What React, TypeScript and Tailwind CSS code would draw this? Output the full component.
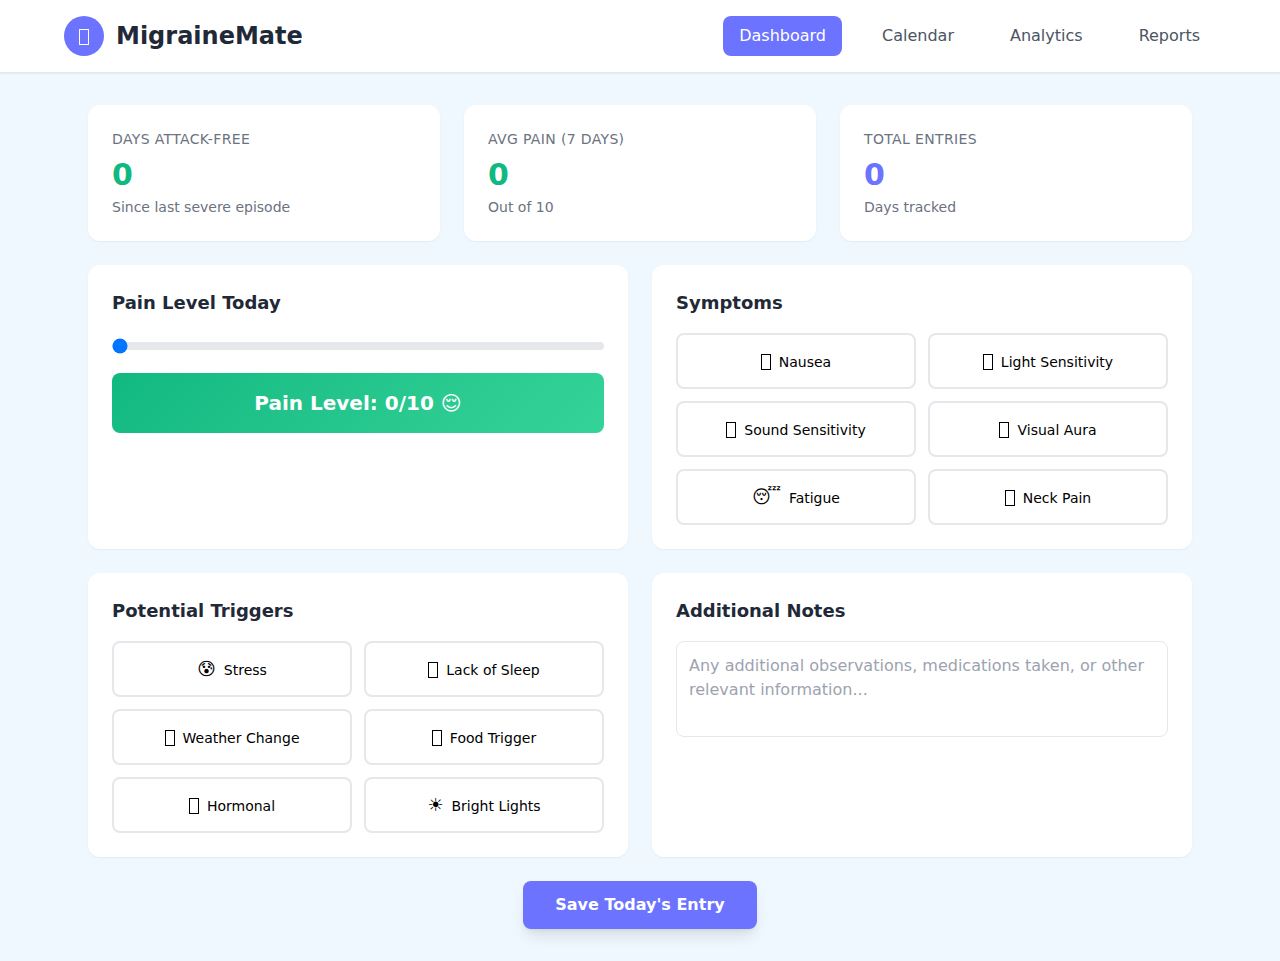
/**
 * MigraineMate dashboard
 *
 * Daily entry form: pain level, symptoms, triggers and free-text notes,
 * with a row of summary stats on top.
 */

import { useState } from 'react';
import type { ReactNode } from 'react';
import clsx from 'clsx';

interface Option {
  id: string;
  label: string;
  /** Symbol before the label, an empty box when left out */
  icon?: string;
}

interface Stat {
  label: string;
  value: number;
  hint: string;
  /** Text color class of the value */
  color: string;
}

const NAV_ITEMS = ['Dashboard', 'Calendar', 'Analytics', 'Reports'];

const STATS: Stat[] = [
  { label: 'Days Attack-Free', value: 0, hint: 'Since last severe episode', color: 'text-[#10b981]' },
  { label: 'Avg Pain (7 days)', value: 0, hint: 'Out of 10', color: 'text-[#10b981]' },
  { label: 'Total Entries', value: 0, hint: 'Days tracked', color: 'text-[#6b73ff]' },
];

const SYMPTOMS: Option[] = [
  { id: 'nausea', label: 'Nausea' },
  { id: 'light', label: 'Light Sensitivity' },
  { id: 'sound', label: 'Sound Sensitivity' },
  { id: 'aura', label: 'Visual Aura' },
  { id: 'fatigue', label: 'Fatigue', icon: '😴' },
  { id: 'neck', label: 'Neck Pain' },
];

const TRIGGERS: Option[] = [
  { id: 'stress', label: 'Stress', icon: '😰' },
  { id: 'sleep', label: 'Lack of Sleep' },
  { id: 'weather', label: 'Weather Change' },
  { id: 'food', label: 'Food Trigger' },
  { id: 'hormonal', label: 'Hormonal' },
  { id: 'lights', label: 'Bright Lights', icon: '☀' },
];

/** Background and face for the current pain level */
function painStyle(level: number) {
  if (level <= 3) return { face: '😌', bg: 'from-[#10b981] to-[#34d399]' };
  if (level <= 6) return { face: '😐', bg: 'from-[#f59e0b] to-[#fbbf24]' };
  return { face: '😖', bg: 'from-[#ef4444] to-[#f87171]' };
}

/** Empty glyph box, sits slightly below the text baseline */
function GlyphBox() {
  return (
    <span
      aria-hidden="true"
      className="inline-block h-4 w-[10px] border border-current align-[-3px]"
    />
  );
}

function Card({ title, children }: { title: string; children: ReactNode }) {
  return (
    <section className="rounded-xl bg-white p-6 shadow-xs">
      <h2 className="mb-4 text-lg font-semibold text-[#1f2937]">{title}</h2>
      {children}
    </section>
  );
}

function OptionGrid({ options }: { options: Option[] }) {
  const [selected, setSelected] = useState<string[]>([]);

  const toggle = (id: string) =>
    setSelected((prev) => (prev.includes(id) ? prev.filter((s) => s !== id) : [...prev, id]));

  return (
    <div className="grid grid-cols-2 gap-3">
      {options.map(({ id, icon, label }) => (
        <button
          key={id}
          type="button"
          aria-pressed={selected.includes(id)}
          onClick={() => toggle(id)}
          className={clsx(
            'rounded-lg border-2 p-3 text-center text-sm',
            selected.includes(id)
              ? 'border-[#6b73ff] bg-[#6b73ff] text-white'
              : 'border-[#e5e7eb] bg-white text-black',
          )}
        >
          <span className="mr-2 text-lg">{icon ?? <GlyphBox />}</span>
          {label}
        </button>
      ))}
    </div>
  );
}

export default function App() {
  const [pain, setPain] = useState(0);
  const [notes, setNotes] = useState('');
  const { face, bg } = painStyle(pain);

  return (
    <div className="min-h-screen bg-[#f0f8ff] font-['DejaVu_Sans',sans-serif] text-[#1f2937]">
      <header className="border-b border-[#e5e7eb] bg-white px-6 py-4 shadow-xs">
        <div className="mx-auto flex max-w-6xl items-center justify-between">
          <div className="flex items-center gap-3">
            <div className="flex size-10 items-center justify-center rounded-full bg-[#6b73ff] text-lg text-white">
              <span>
                <GlyphBox />
              </span>
            </div>
            <h1 className="text-2xl font-bold">MigraineMate</h1>
          </div>
          <nav className="flex gap-6">
            {NAV_ITEMS.map((item, i) => (
              <a
                key={item}
                href={`#${item.toLowerCase()}`}
                className={clsx(
                  'rounded-lg px-4 py-2',
                  i === 0 ? 'bg-[#6b73ff] text-white' : 'text-[#4b5563]',
                )}
              >
                {item}
              </a>
            ))}
          </nav>
        </div>
      </header>

      <main className="mx-auto max-w-6xl px-6 py-8">
        {/* Summary stats */}
        <div className="mb-6 grid grid-cols-3 gap-6">
          {STATS.map((stat) => (
            <div key={stat.label} className="rounded-xl bg-white p-6 shadow-xs">
              <h3 className="mb-2 text-sm tracking-wide text-[#6b7280] uppercase">{stat.label}</h3>
              <p className={clsx('mb-1 text-3xl font-bold', stat.color)}>{stat.value}</p>
              <p className="text-sm text-[#6b7280]">{stat.hint}</p>
            </div>
          ))}
        </div>

        {/* Today's entry */}
        <form onSubmit={(e) => e.preventDefault()}>
          <div className="mb-6 grid grid-cols-2 gap-6">
            <Card title="Pain Level Today">
              <div className="mb-4">
                <input
                  type="range"
                  min={0}
                  max={10}
                  value={pain}
                  onChange={(e) => setPain(Number(e.target.value))}
                  aria-label="Pain level"
                  className="h-2 w-full cursor-pointer appearance-none rounded-lg bg-[#e5e7eb]"
                />
              </div>
              <div
                className={clsx(
                  'rounded-lg bg-linear-135 p-4 text-center text-xl font-semibold text-white',
                  bg,
                )}
              >
                Pain Level: {pain}/10 {face}
              </div>
            </Card>

            <Card title="Symptoms">
              <OptionGrid options={SYMPTOMS} />
            </Card>

            <Card title="Potential Triggers">
              <OptionGrid options={TRIGGERS} />
            </Card>

            <Card title="Additional Notes">
              <textarea
                value={notes}
                onChange={(e) => setNotes(e.target.value)}
                aria-label="Additional notes"
                placeholder="Any additional observations, medications taken, or other relevant information..."
                className="block h-24 w-full resize-none rounded-lg border border-[#e5e7eb] p-3 placeholder:text-[#9ca3af]"
              />
            </Card>
          </div>

          <div className="flex justify-center">
            <button
              type="submit"
              className="rounded-lg bg-[#6b73ff] px-8 py-3 font-semibold text-white shadow-lg"
            >
              Save Today's Entry
            </button>
          </div>
        </form>
      </main>
    </div>
  );
}
